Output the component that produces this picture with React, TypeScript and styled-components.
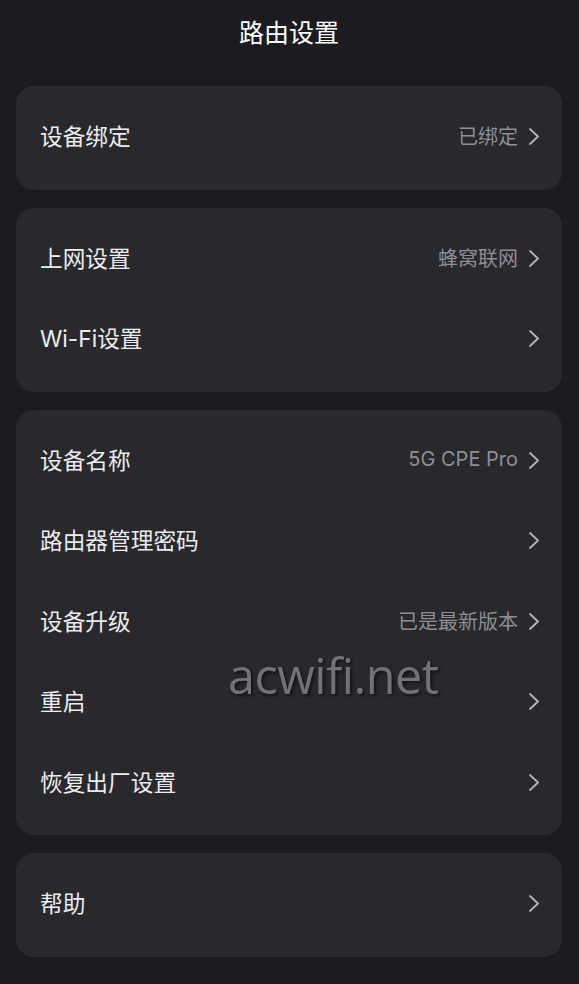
import React from "react";
import styled, { createGlobalStyle } from "styled-components";

const Global = createGlobalStyle`
  html, body { margin: 0; padding: 0; background: #1c1c20; }
  body { font-family: Inter, "Noto Sans CJK SC", "Noto Sans", sans-serif; }
  * { box-sizing: border-box; }
`;

const Page = styled.div`
  position: relative;
  width: 579px;
  min-height: 984px;
  background: #1c1c20;
  padding: 0 17px 0 16px;
  display: flex;
  flex-direction: column;
`;

const Title = styled.h1`
  margin: 0;
  height: 86px;
  padding-top: 12px;
  text-align: center;
  font-size: 25px;
  line-height: 38px;
  font-weight: 400;
  color: #ffffff;
  font-family: "Noto Sans CJK SC", sans-serif;
`;

const Cards = styled.div`
  display: flex;
  flex-direction: column;
  gap: 18px;
`;

const Card = styled.div`
  background: #28282d;
  border-radius: 18px;
  padding: 12px 0 11px;
  display: flex;
  flex-direction: column;
`;

const Row = styled.div`
  height: 80.5px;
  display: flex;
  align-items: center;
  padding: 0 23px 5px 24px;
`;

const Label = styled.span`
  flex: 1;
  font-size: 22.7px;
  color: #ececee;
  font-family: Inter, "Noto Sans CJK SC", sans-serif;
`;

const Value = styled.span`
  font-size: 20px;
  color: #8e8e93;
  margin-right: 11px;
  font-family: Inter, "Noto Sans CJK SC", sans-serif;
`;

const Chevron = styled.svg`
  width: 10px;
  height: 17px;
  flex: none;
  margin-top: 2px;
`;

const Watermark = styled.div`
  position: absolute;
  left: 228px;
  top: 642px;
  font-size: 48.5px;
  font-family: "Open Sans", "Liberation Sans", sans-serif;
  color: #727177;
  text-shadow: 2px 2px 3px #141417;
  pointer-events: none;
  letter-spacing: -0.5px;
`;

type Item = { label: string; value?: string };

const groups: Item[][] = [
  [{ label: "设备绑定", value: "已绑定" }],
  [{ label: "上网设置", value: "蜂窝联网" }, { label: "Wi-Fi设置" }],
  [
    { label: "设备名称", value: "5G CPE Pro" },
    { label: "路由器管理密码" },
    { label: "设备升级", value: "已是最新版本" },
    { label: "重启" },
    { label: "恢复出厂设置" },
  ],
  [{ label: "帮助" }],
];

export default function App() {
  return (
    <>
      <Global />
      <Page>
        <Title>路由设置</Title>
        <Cards>
          {groups.map((g, i) => (
            <Card key={i}>
              {g.map((it) => (
                <Row key={it.label}>
                  <Label>{it.label}</Label>
                  {it.value && <Value>{it.value}</Value>}
                  <Chevron viewBox="0 0 10 17">
                    <path d="M1 1 L9 8.5 L1 16" fill="none" stroke="#b4b4b8" strokeWidth="1.8" strokeLinecap="round" strokeLinejoin="round" />
                  </Chevron>
                </Row>
              ))}
            </Card>
          ))}
        </Cards>
        <Watermark>acwifi.net</Watermark>
      </Page>
    </>
  );
}
